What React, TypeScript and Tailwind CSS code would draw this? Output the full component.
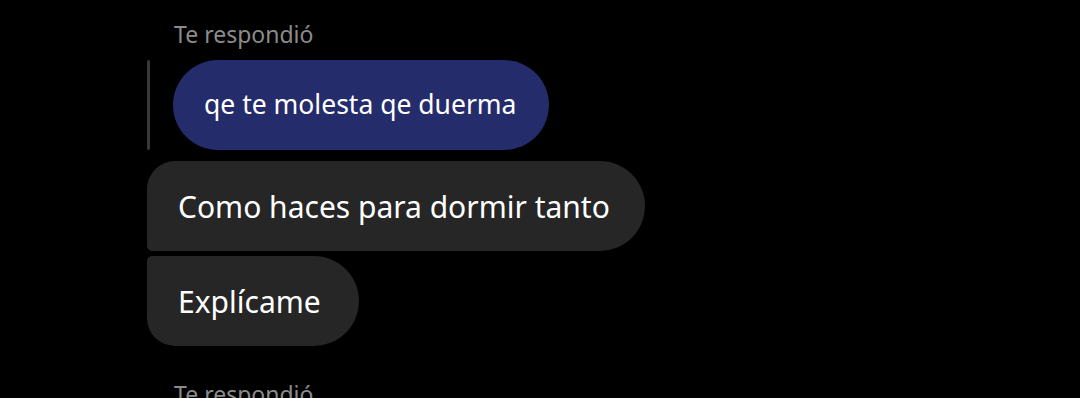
import React from "react";

const App = () => {
  return (
    <div
      className="w-[1080px] h-[398px] overflow-hidden bg-black"
      style={{ fontFamily: "'Noto Sans', Roboto, sans-serif" }}
    >
      <div className="flex flex-col items-start pl-[147px] pt-[19px]">
        <div className="ml-[27px] text-[23px] leading-[30px] text-[#8b8b8b]">Te respondió</div>

        <div className="flex items-stretch mt-[11px]">
          <div className="w-[3px] rounded-full bg-[#383838]" />
          <div className="ml-[23px] h-[90px] pl-[31px] pr-[32px] flex items-center rounded-full bg-[#242c6c] text-white text-[26.5px]">
            qe te molesta qe duerma
          </div>
        </div>

        <div className="mt-[11px] h-[90px] pl-[31px] pr-[35px] flex items-center rounded-r-[45px] rounded-tl-[28px] rounded-bl-[5px] bg-[#262626] text-white text-[30px]">
          Como haces para dormir tanto
        </div>

        <div className="mt-[5px] h-[90px] pl-[31px] pr-[38px] flex items-center rounded-r-[45px] rounded-tl-[5px] rounded-bl-[28px] bg-[#262626] text-white text-[30px]">
          Explícame
        </div>

        <div className="ml-[27px] mt-[33px] text-[23px] leading-[30px] text-[#8b8b8b]">Te respondió</div>
      </div>
    </div>
  );
};

export default App;
